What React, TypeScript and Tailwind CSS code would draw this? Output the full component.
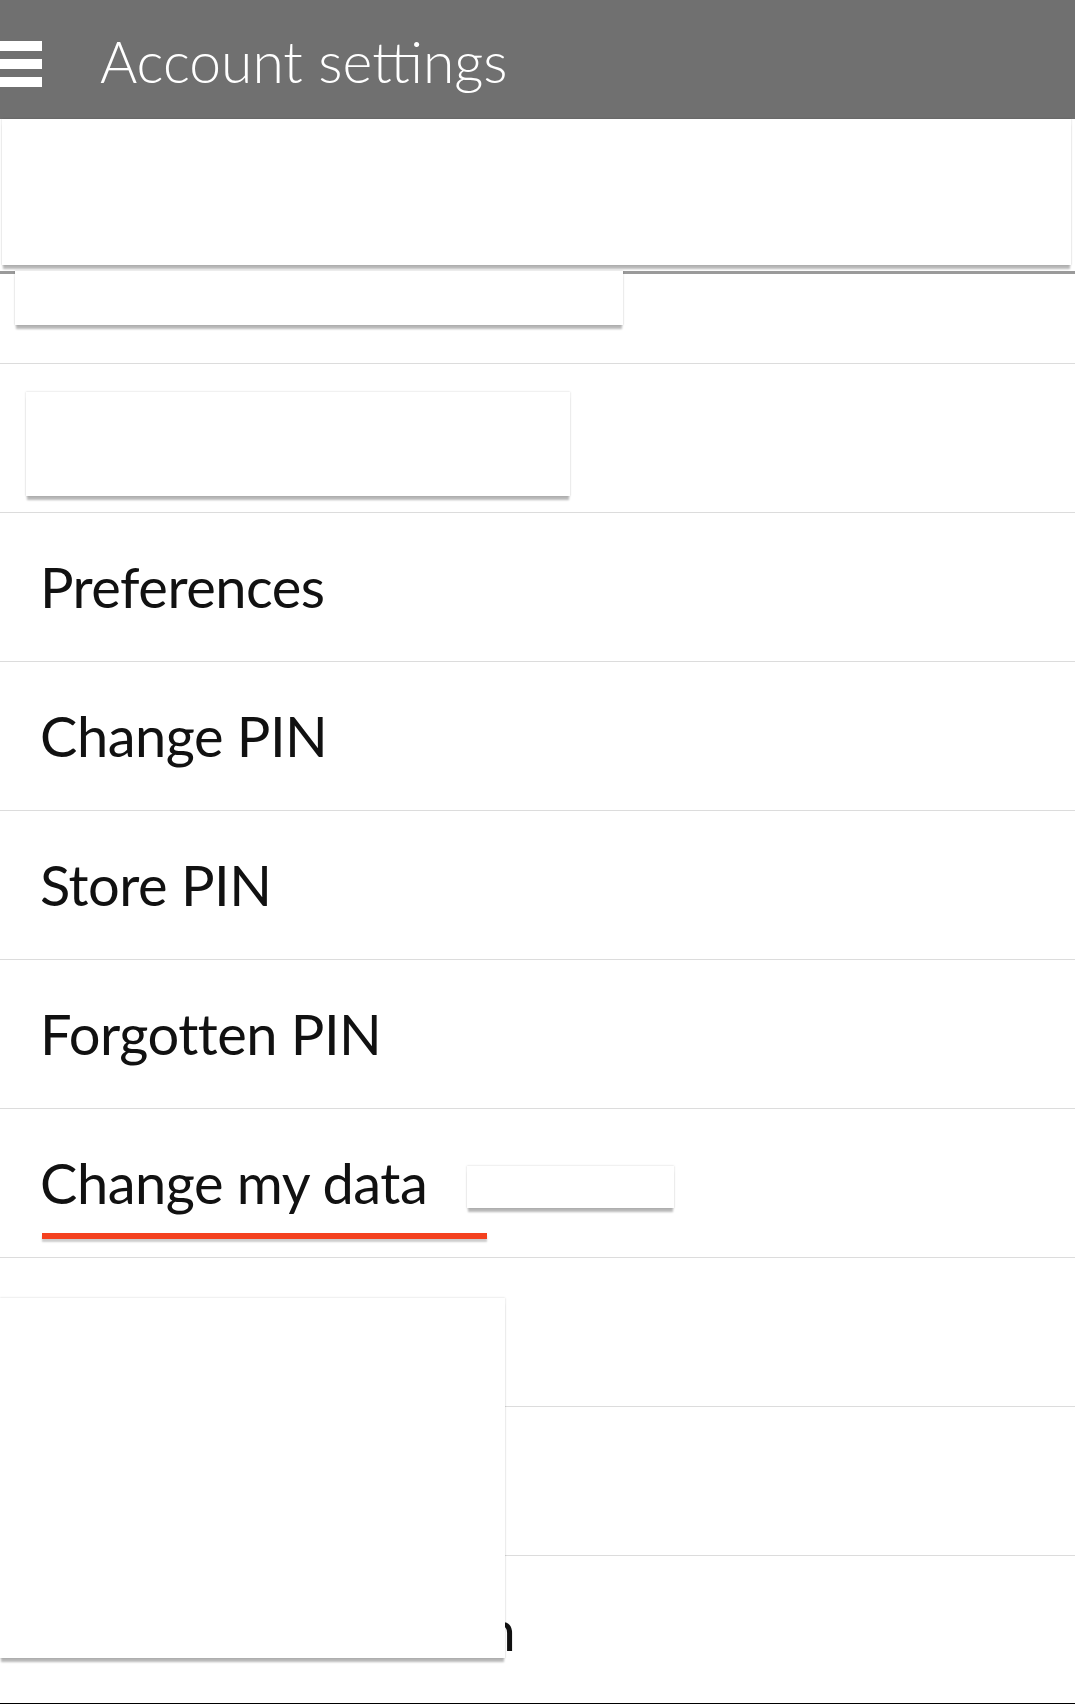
import React from "react";

const font = { fontFamily: "Lato, 'Open Sans', sans-serif" };

const panel =
  "bg-white shadow-[0_5px_2px_-1px_rgba(0,0,0,0.28),0_0_2px_rgba(0,0,0,0.18)]";

function Row({
  children,
  last,
  tight,
}: {
  children?: React.ReactNode;
  last?: boolean;
  tight?: boolean;
}) {
  return (
    <div
      className={
        "h-[149px] border-t border-[#dcdcdc] flex items-center pl-[40px] " +
        (last ? "border-b border-b-black" : "")
      }
    >
      <span
        className={
          "text-[56px] leading-none text-[#111] whitespace-nowrap " +
          (tight ? "tracking-[-1px]" : "tracking-[-0.5px]")
        }
      >
        {children}
      </span>
    </div>
  );
}

export default function App() {
  return (
    <div className="relative w-[1075px] h-[1704px] bg-white overflow-hidden" style={font}>
      {/* header */}
      <div className="h-[119px] bg-[#707070] flex items-center">
        <div className="w-[42px] flex flex-col gap-[8px] mt-[8px]">
          <span className="h-[10px] bg-white" />
          <span className="h-[10px] bg-white" />
          <span className="h-[10px] bg-white" />
        </div>
        <h1 className="ml-[58px] text-white text-[57px] font-light leading-none mt-[4px]">
          Account settings
        </h1>
      </div>

      {/* floating panels under the header */}
      <div className="h-[244px] flex flex-col">
        <div className={panel + " ml-[2px] mr-[4px] h-[146px]"} />
        <div className="mt-[6px] border-t-[3px] border-[#9a9a9a]">
          <div className={panel + " relative -mt-[3px] ml-[15px] w-[608px] h-[54px]"} />
        </div>
      </div>

      <div className="h-[149px] border-t border-[#dcdcdc] pt-[28px] pl-[26px]">
        <div className={panel + " w-[544px] h-[104px]"} />
      </div>
      <Row>Preferences</Row>
      <Row>Change PIN</Row>
      <Row>Store PIN</Row>
      <Row>Forgotten PIN</Row>
      <div className="h-[149px] border-t border-[#dcdcdc] flex items-center pl-[40px] gap-[40px]">
        <div className="relative">
          <span className="text-[56px] leading-none text-[#111] tracking-[-0.5px]">Change my data</span>
          <div className="absolute left-[2px] w-[445px] top-[78px] h-[6px] bg-[#f4411f] shadow-[0_3px_2px_rgba(0,0,0,0.2)]" />
        </div>
        <div className={panel + " w-[207px] h-[42px] mt-[8px]"} />
      </div>
      <Row>Notifications</Row>
      <Row>Data protection</Row>
      <Row last tight>
        Contact information
      </Row>

      {/* big floating panel over the lower rows */}
      <div className={panel + " absolute left-0 w-[505px] top-[1298px] h-[360px]"} />
    </div>
  );
}
